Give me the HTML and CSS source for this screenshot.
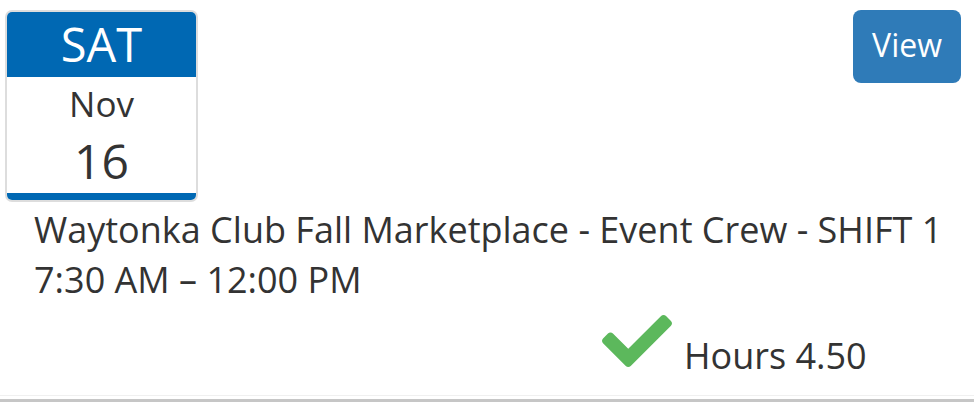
FILE: index.html
```html
<!DOCTYPE html>
<html>
<head>
<meta charset="utf-8">
<link rel="stylesheet" href="styles.css">
</head>
<body>
<div class="item">
  <div class="top">
    <div class="cal">
      <div class="cal-day">SAT</div>
      <div class="cal-month">Nov</div>
      <div class="cal-date">16</div>
    </div>
    <a class="btn">View</a>
  </div>
  <div class="title">
    <div class="line">Waytonka Club Fall Marketplace - Event Crew - SHIFT 1</div>
    <div class="line">7:30 AM – 12:00 PM</div>
  </div>
  <div class="hours">
    <svg class="check" viewBox="0 0 512 512" width="70" height="70"><path fill="#5cb85c" d="M173.898 439.404l-166.4-166.4c-9.997-9.997-9.997-26.206 0-36.204l36.203-36.204c9.997-9.998 26.207-9.998 36.204 0L192 312.69 432.095 72.596c9.997-9.997 26.207-9.997 36.204 0l36.203 36.204c9.997 9.997 9.997 26.206 0 36.204l-294.4 294.401c-9.998 9.997-26.207 9.997-36.204-.001z"/></svg>
    <span class="hours-text">Hours 4.50</span>
  </div>
  <div class="rule-light"></div>
  <div class="rule"></div>
</div>
</body>
</html>
```

FILE: styles.css
```css
html, body {
  margin: 0;
  padding: 0;
  background: #fff;
}
body {
  font-family: "Open Sans", "Liberation Sans", sans-serif;
  color: #333;
}
.item {
  width: 974px;
}
.top {
  display: flex;
  justify-content: space-between;
  align-items: flex-start;
  padding: 10px 13px 0 5px;
}
.cal {
  width: 189px;
  border: 2px solid #dddddd;
  border-radius: 7px;
  overflow: hidden;
  text-align: center;
}
.cal-day {
  background: #0068b3;
  color: #fff;
  font-size: 47px;
  height: 65px;
  line-height: 65px;
}
.cal-month {
  font-size: 35px;
  line-height: 50px;
  padding-top: 2px;
}
.cal-date {
  font-size: 48px;
  line-height: 64px;
  border-bottom: 7px solid #0068b3;
}
.btn {
  display: block;
  background: #2f7bb8;
  color: #fff;
  font-size: 32px;
  line-height: 45px;
  padding: 12px 19px 16px;
  border-radius: 8px;
}
.title {
  padding-left: 34px;
  margin-top: 3px;
  font-size: 36px;
  line-height: 50px;
}
.hours {
  display: flex;
  align-items: flex-start;
  padding-left: 602px;
}
.check {
  display: block;
  margin-top: 1px;
}
.hours-text {
  font-size: 36px;
  line-height: 50px;
  margin-top: 26px;
  margin-left: 12px;
}
.rule-light {
  margin-top: 14px;
  height: 1px;
  background: #f0f0f0;
}
.rule {
  margin-top: 3px;
  height: 3px;
  background: #c6c6c6;
}
```
